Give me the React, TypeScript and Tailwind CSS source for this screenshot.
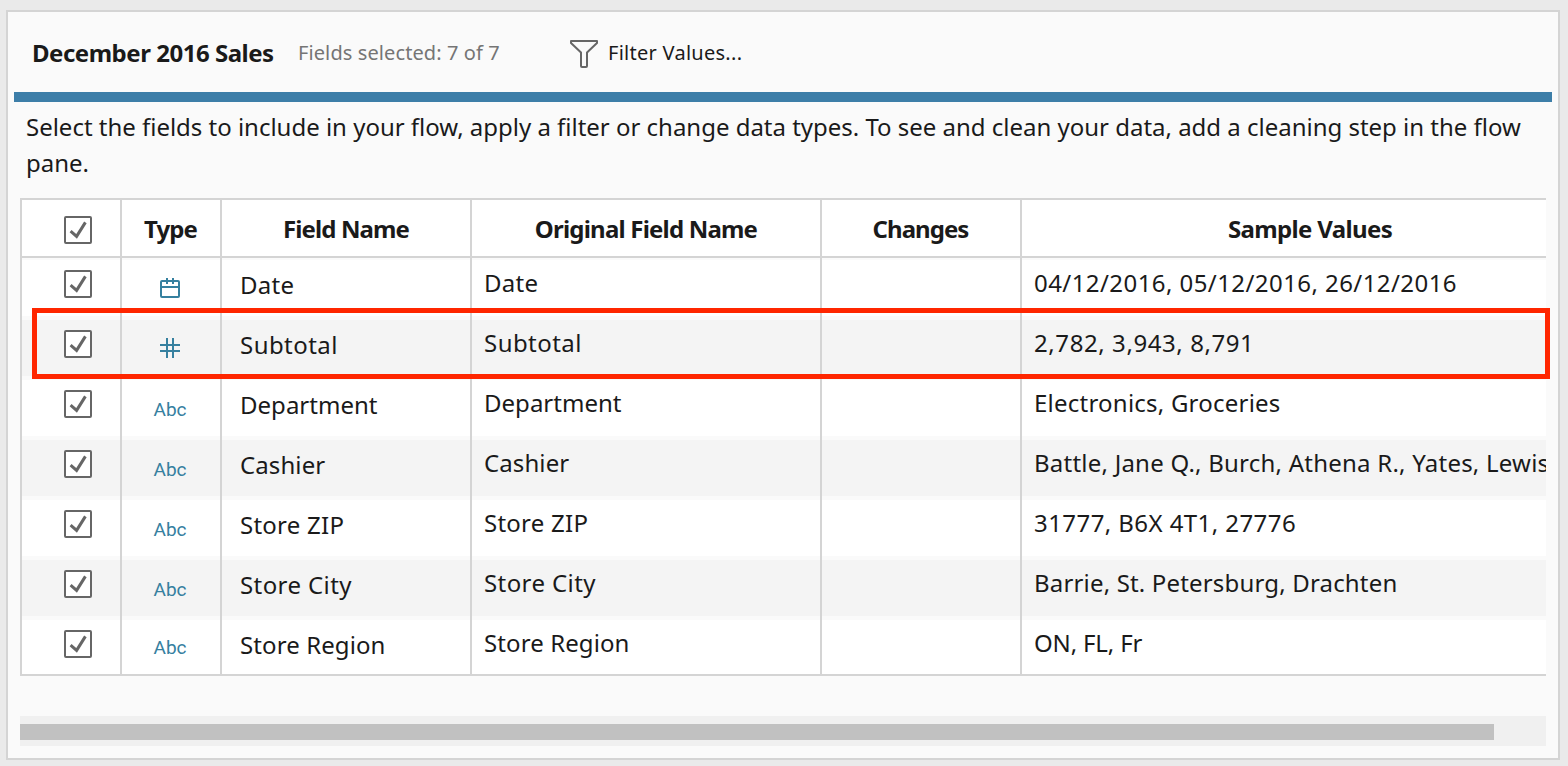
import React from "react";

type Kind = "date" | "number" | "text";
type Field = { kind: Kind; name: string; nameClass: string; samples: string; samplesClass: string };

const fields: Field[] = [
  { kind: "date", name: "Date", nameClass: "tracking-[0.25px]", samples: "04/12/2016, 05/12/2016, 26/12/2016", samplesClass: "tracking-[0.43px]" },
  { kind: "number", name: "Subtotal", nameClass: "tracking-[0.45px]", samples: "2,782, 3,943, 8,791", samplesClass: "tracking-[0.58px]" },
  { kind: "text", name: "Department", nameClass: "tracking-[0.02px]", samples: "Electronics, Groceries", samplesClass: "tracking-[0.23px]" },
  { kind: "text", name: "Cashier", nameClass: "tracking-[0.1px]", samples: "Battle, Jane Q., Burch, Athena R., Yates, Lewis", samplesClass: "tracking-[0.23px]" },
  { kind: "text", name: "Store ZIP", nameClass: "tracking-[0.25px]", samples: "31777, B6X 4T1, 27776", samplesClass: "tracking-[0.43px]" },
  { kind: "text", name: "Store City", nameClass: "tracking-[0.4px]", samples: "Barrie, St. Petersburg, Drachten", samplesClass: "tracking-[0.17px]" },
  { kind: "text", name: "Store Region", nameClass: "tracking-[0.1px]", samples: "ON, FL, Fr", samplesClass: "tracking-[-0.15px]" },
];

const grid = "grid grid-cols-[100px_100px_250px_350px_200px_576px]";

function Checkbox() {
  return (
    <span className="block size-7 rounded-[2px] border-2 border-[#666] bg-white">
      <svg className="block size-6" viewBox="0 0 24 24" fill="none" stroke="#666" strokeWidth="3">
        <path d="M4.6 13.2 L10.6 18.4 L19.4 4.4" />
      </svg>
    </span>
  );
}

function TypeIcon({ kind }: { kind: Kind }) {
  if (kind === "date")
    return (
      <svg className="block size-5" viewBox="0 0 20 20" fill="none" stroke="#36809f" strokeWidth="2">
        <rect x="1" y="3" width="18" height="16" rx="1" />
        <path d="M1 9H19M7 0V6M13 0V6" />
      </svg>
    );
  if (kind === "number")
    return (
      <svg className="block size-5" viewBox="0 0 20 20" fill="none" stroke="#36809f" strokeWidth="2">
        <path d="M0 7H20M0 13H20M7 0V20M13 0V20" />
      </svg>
    );
  return <span className="font-['Roboto',sans-serif] text-[19px] leading-5 text-[#36809f]">Abc</span>;
}

function Cell({ shade, className = "", children }: { shade: boolean; className?: string; children?: React.ReactNode }) {
  return (
    <div className="border-r-2 border-[#d4d4d4]">
      <div className={`h-14 whitespace-nowrap ${shade ? "bg-[#f4f4f4]" : "bg-white"} ${className}`}>{children}</div>
    </div>
  );
}

function Row({ field, index }: { field: Field; index: number }) {
  const shade = index % 2 === 1;
  const last = index === fields.length - 1;
  return (
    <div className={`${grid} bg-[#fafafa] ${last ? "h-[54px] overflow-hidden" : "h-[60px]"}`}>
      <Cell shade={shade} className="pl-[42px] pt-[10px]"><Checkbox /></Cell>
      <Cell shade={shade} className={`flex justify-center pr-0.5 ${field.kind !== "text" ? "pt-[18px]" : last ? "pt-[18px]" : "pt-5"}`}>
        <TypeIcon kind={field.kind} />
      </Cell>
      <Cell shade={shade} className={`pl-[18px] pt-[9px] leading-8 ${field.nameClass}`}>{field.name}</Cell>
      <Cell shade={shade} className={`pl-3 pt-[7px] leading-8 ${field.nameClass}`}>{field.name}</Cell>
      <Cell shade={shade} />
      <Cell shade={shade} className={`pl-3 pt-[7px] leading-8 ${field.samplesClass}`}>{field.samples}</Cell>
    </div>
  );
}

const headers = [
  { label: "Type", spacing: "tracking-[-0.9px] pr-px" },
  { label: "Field Name", spacing: "tracking-[-0.9px]" },
  { label: "Original Field Name", spacing: "tracking-[-0.8px]" },
  { label: "Changes", spacing: "tracking-[-0.95px] pr-px" },
  { label: "Sample Values", spacing: "tracking-[-0.65px] pl-0.5" },
];

export default function App() {
  return (
    <div className="h-[766px] w-[1568px] overflow-hidden bg-[#eaeaea] pl-1.5 pt-2.5 font-['Noto_Sans',sans-serif] text-[24px] text-[#1a1a1a]">
      <main className="flex h-[750px] w-[1554px] flex-col border-2 border-[#d4d4d4] bg-[#fafafa]">
        <header className="flex h-20 items-center whitespace-nowrap pl-6 pt-[3px]">
          <h1 className="w-[266px] pb-0.5 text-[24px] font-bold tracking-[-0.48px]">December 2016 Sales</h1>
          <span className="w-[272px] pb-0.5 text-[20px] tracking-[0.1px] text-[#757575]">Fields selected: 7 of 7</span>
          <svg className="mr-[10px] size-7" viewBox="0 0 28 28" fill="none" stroke="#666" strokeWidth="2" strokeLinejoin="round">
            <path d="M1 1H27V3L17 12.5V26Q17 27 16 27H12Q11 27 11 26V12.5L1 3Z" />
          </svg>
          <span className="pb-0.5 text-[20px] tracking-[0.27px]">Filter Values...</span>
        </header>
        <div className="ml-1.5 h-2.5 w-[1538px] shrink-0 bg-[#3d7ea8]" />
        <p className="ml-[18px] h-24 w-[1520px] shrink-0 pt-[7px] leading-9 tracking-[-0.014px]">
          <span className="block whitespace-nowrap">Select the fields to include in your flow, apply a filter or change data types. To see and clean your data, add a cleaning step in the flow</span>
          <span className="block">pane.</span>
        </p>
        <section className="relative ml-3 h-[478px] w-[1526px] shrink-0">
          <div className="h-full overflow-hidden border-y-2 border-l-2 border-[#d4d4d4]">
            <div className={`${grid} h-[58px] border-b-2 border-[#d4d4d4] bg-white`}>
              <div className="border-r-2 border-[#d4d4d4] pl-[42px] pt-4"><Checkbox /></div>
              {headers.map((h) => (
                <div key={h.label} className={`whitespace-nowrap border-r-2 border-[#d4d4d4] pt-[13px] text-center font-bold leading-8 ${h.spacing}`}>{h.label}</div>
              ))}
            </div>
            <div className={`${grid} h-0.5 bg-[#fafafa]`}>
              {[0, 1, 2, 3, 4].map((n) => <div key={n} className="border-r-2 border-[#d4d4d4]" />)}
            </div>
            {fields.map((f, i) => <Row key={f.name} field={f} index={i} />)}
          </div>
          <div className="pointer-events-none absolute left-3 top-[110px] h-[71px] w-[1518px] border-[5px] border-[#ff2600]" />
        </section>
        <div className="ml-3 mt-10 h-[30px] w-[1526px] shrink-0 bg-[#f0f0f0] pt-2">
          <div className="h-4 w-[1474px] bg-[#c1c1c1]" />
        </div>
      </main>
    </div>
  );
}
